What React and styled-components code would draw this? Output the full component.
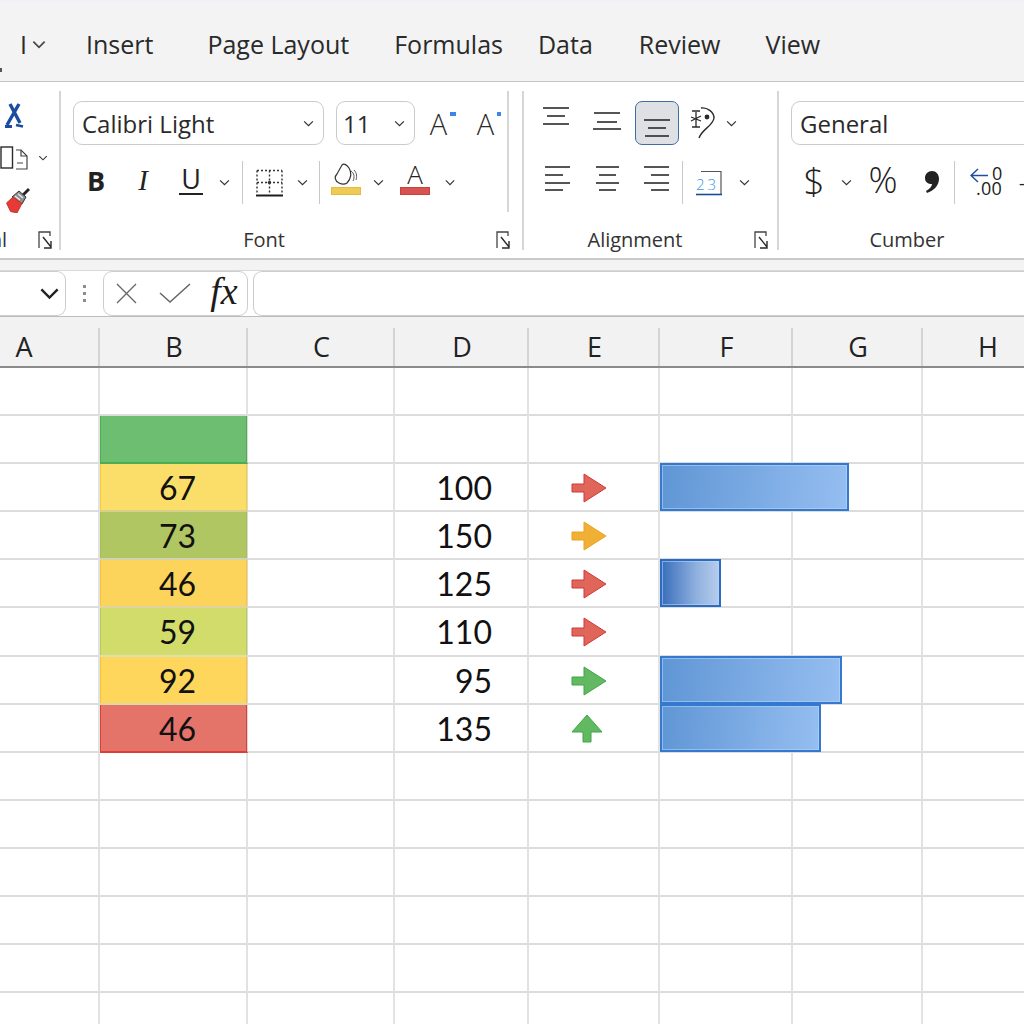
import React from "react";
import styled, { createGlobalStyle } from "styled-components";

const GlobalStyle = createGlobalStyle`
    html, body {
        margin: 0;
        padding: 0;
        background: #fff;
    }
    body {
        font-family: "Open Sans", "Liberation Sans", sans-serif;
        color: #1f1f1f;
    }
`

const Page = styled.div`
    width: 1024px;
    height: 1024px;
    overflow: hidden;
    background: #fff;
`

/* tabs */
const TabBar = styled.div`
    position: relative;
    height: 82px;
    box-sizing: border-box;
    padding: 5px 0 0 20px;
    background: #f3f3f3;
    border-top: 2px solid #eef2f7;
    border-bottom: 1px solid #c6c6c6;
    display: flex;
    align-items: center;
    white-space: nowrap;
    &::before {
        content: "";
        position: absolute;
        left: 0;
        top: 66px;
        width: 2px;
        height: 4px;
        background: #555;
    }
`

const Tab = styled.span`
    font-size: 25px;
    margin-left: ${(p) => p.$gap || 0}px;
    color: #2a2a2a;
    line-height: 1;
`

const TabChevron = styled.span`
    display: flex;
    margin-left: 5px;
`

/* ribbon */
const Ribbon = styled.div`
    height: 178px;
    box-sizing: border-box;
    display: flex;
    background: #fff;
    border-bottom: 2px solid #c9c9c9;
`

const Group = styled.section`
    flex: none;
    width: ${(p) => p.$width}px;
    height: 176px;
    display: flex;
    flex-direction: column;
`

const GroupBody = styled.div`
    display: flex;
    height: 146px;
`

const Divider = styled.div`
    flex: none;
    width: 2px;
    height: ${(p) => p.$h || 159}px;
    margin-top: 9px;
    background: #d6d6d6;
`

const Controls = styled.div`
    flex: none;
    width: ${(p) => p.$width}px;
    box-sizing: border-box;
    padding: 19px 0 0 12px;
    display: flex;
    flex-direction: column;
    gap: 16px;
`

const Row = styled.div`
    height: ${(p) => p.$h || 44}px;
    display: flex;
    align-items: center;
`

const Slot = styled.div`
    flex: none;
    width: ${(p) => p.$w}px;
    margin-left: ${(p) => p.$ml || 0}px;
    height: 100%;
    display: flex;
    align-items: center;
    justify-content: center;
`

const ActiveSlot = styled(Slot)`
    height: 44px;
    box-sizing: border-box;
    background: #dfe0e3;
    border: 1px solid #3f6ea6;
    border-radius: 7px;
`

const Select = styled.div`
    flex: none;
    width: ${(p) => p.$w}px;
    height: 44px;
    box-sizing: border-box;
    margin-left: ${(p) => p.$ml || 0}px;
    padding: 0 9px 0 ${(p) => p.$pl || 8}px;
    border: 1px solid #cbcbcb;
    border-radius: 9px;
    display: flex;
    align-items: center;
    justify-content: space-between;
    font-size: 24px;
    color: #2a2a2a;
`

const Sep = styled.div`
    flex: none;
    width: 1px;
    height: 43px;
    background: #c8c8c8;
`

const LabelRow = styled.div`
    height: 24px;
    display: flex;
    align-items: center;
    padding-right: ${(p) => p.$pr || 0}px;
`

const Label = styled.div`
    flex: none;
    width: ${(p) => p.$w}px;
    margin-left: ${(p) => p.$ml || 0}px;
    text-align: center;
    font-size: 20px;
    line-height: 24px;
    color: #333;
    white-space: nowrap;
`

const Launcher = styled.div`
    margin-left: auto;
    display: flex;
`

const GrowGlyph = styled.span`
    display: flex;
    align-items: flex-start;
    font-size: 29px;
    font-weight: 300;
    line-height: 1;
    color: #2a2a2a;
    &::after {
        content: "";
        width: ${(p) => p.$dot}px;
        height: 4px;
        margin: 3px 0 0 3px;
        background: #3b86e8;
    }
`

const FontGlyph = styled.span`
    font-family: ${(p) => (p.$serif ? '"Liberation Serif", serif' : '"Open Sans", sans-serif')};
    font-size: ${(p) => p.$size || 26}px;
    font-weight: ${(p) => p.$weight || 400};
    font-style: ${(p) => (p.$italic ? "italic" : "normal")};
    margin-bottom: ${(p) => p.$lift || 0}px;
    color: #222;
    line-height: 1;
`

const UnderGlyph = styled(FontGlyph)`
    border-bottom: 2px solid #222;
    padding: 0 2px 1px;
`

const ColorGlyph = styled.div`
    display: flex;
    flex-direction: column;
    align-items: center;
    justify-content: flex-end;
    width: 30px;
    height: 32px;
    margin-bottom: 7px;
    box-sizing: border-box;
`

const ColorBar = styled.div`
    width: 30px;
    height: 8px;
    flex: none;
    margin-top: 2px;
    background: ${(p) => p.$color};
    box-shadow: inset 0 0 0 1px ${(p) => p.$edge};
`

const ColorLetter = styled.span`
    font-size: 26px;
    line-height: 22px;
    font-weight: 300;
    color: #222;
`

const ClipStack = styled.div`
    flex: none;
    width: 60px;
    height: 146px;
    display: flex;
    flex-direction: column;
`

const ClipItem = styled.div`
    display: flex;
    align-items: center;
    height: ${(p) => p.$h}px;
    margin-top: ${(p) => p.$mt}px;
    padding-left: ${(p) => p.$pl || 0}px;
`

/* formula bar */
const Band = styled.div`
    height: 10px;
    background: #f3f3f3;
    border-bottom: 1px solid #d9d9d9;
`

const FormulaBar = styled.div`
    height: 46px;
    box-sizing: border-box;
    border-bottom: 1px solid #bdbdbd;
    display: flex;
    background: #fff;
`

const NameBox = styled.div`
    flex: none;
    width: 66px;
    height: 45px;
    box-sizing: border-box;
    padding-right: 5px;
    border: 1px solid #cdcdcd;
    border-left: none;
    border-radius: 0 9px 9px 0;
    display: flex;
    align-items: center;
    justify-content: flex-end;
`

const Grip = styled.div`
    flex: none;
    width: 37px;
    display: flex;
    flex-direction: column;
    align-items: center;
    justify-content: center;
    gap: 4px;
    i {
        width: 3px;
        height: 3px;
        background: #8d8d8d;
    }
`

const FxButtons = styled.div`
    flex: none;
    width: 145px;
    height: 45px;
    box-sizing: border-box;
    border: 1px solid #cdcdcd;
    border-radius: 9px;
    display: flex;
    align-items: center;
`

const FxSlot = styled.div`
    flex: none;
    width: ${(p) => p.$w}px;
    margin-left: ${(p) => p.$ml || 0}px;
    display: flex;
    justify-content: center;
`

const FxText = styled.span`
    font-family: "Liberation Serif", serif;
    font-style: italic;
    font-size: 38px;
    line-height: 1;
    margin-bottom: 6px;
    color: #1b1b1b;
`

const FormulaInput = styled.div`
    flex: 1;
    height: 45px;
    box-sizing: border-box;
    margin-left: 5px;
    border: 1px solid #cdcdcd;
    border-right: none;
    border-radius: 9px 0 0 9px;
`

/* sheet */
const COLUMNS = "152px 148px 147px 134px 131px 133px 130px 130px";

const ColumnHeader = styled.div`
    height: 51px;
    box-sizing: border-box;
    margin-left: -52px;
    width: 1105px;
    padding-top: 11px;
    background: #f2f2f2;
    border-bottom: 2px solid #8b8b8b;
    display: grid;
    grid-template-columns: ${COLUMNS};
`

const HeaderCell = styled.div`
    box-sizing: border-box;
    padding: 0 0 2px 2px;
    border-right: 2px solid #d4d4d4;
    display: flex;
    align-items: center;
    justify-content: center;
    font-size: 27px;
    line-height: 1;
    color: #222;
`

const Sheet = styled.div`
    margin-left: -52px;
    width: 1105px;
    display: grid;
    grid-template-columns: ${COLUMNS};
    grid-template-rows: repeat(5, 48px) 49px repeat(8, 48px);
`

const Cell = styled.div`
    position: relative;
    box-sizing: border-box;
    border-right: 2px solid #e2e2e2;
    border-bottom: 2px solid #dcdcdc;
    display: flex;
    align-items: center;
    font-family: Lato, "Liberation Sans", sans-serif;
    font-size: 32px;
    color: #111;
`

const HeatCell = styled(Cell)`
    justify-content: center;
    padding-left: 8px;
    background: ${(p) => p.$bg};
    box-shadow: inset 1px 0 0 ${(p) => p.$edge}, inset -1px 0 0 ${(p) => p.$edge};
    border-bottom-color: ${(p) => p.$line};
    border-right-width: 1px;
    border-right-color: #d9d9d9;
`

const NumberCell = styled(Cell)`
    justify-content: flex-end;
    padding-right: 35px;
`

const ArrowCell = styled(Cell)`
    justify-content: center;
    padding-right: ${(p) => p.$pr}px;
    padding-top: 1px;
`

const DataBar = styled.div`
    position: absolute;
    top: -1px;
    left: 0;
    z-index: 1;
    width: ${(p) => p.$width}px;
    height: 48px;
    box-sizing: border-box;
    border: 2px solid ${(p) => (p.$short ? "#2a6cc4" : "#3279cf")};
    background: ${(p) =>
        p.$short
            ? "linear-gradient(90deg, #3a6fbb 0%, #8fb0de 60%, #b6cdec 100%)"
            : "linear-gradient(95deg, #6096d5 0%, #95bef1 100%)"};
    box-shadow: inset 0 0 0 1px rgba(190, 215, 245, 0.55);
`

/* icons */
const Chevron = ({ w = 11, h = 7, color = "#333", sw = 1.4 }) => (
    <svg width={w} height={h} viewBox="0 0 12 8">
        <path d="M1 1.5 6 6.5 11 1.5" fill="none" stroke={color} strokeWidth={sw} />
    </svg>
)

const Lines = ({ w, h, lines }) => (
    <svg width={w} height={h} viewBox={`0 0 ${w} ${h}`}>
        {lines.map(([x1, x2, y]) => (
            <line key={y} x1={x1} x2={x2} y1={y} y2={y} stroke="#2b2b2b" strokeWidth="1.6" />
        ))}
    </svg>
)

const DialogLauncher = () => (
    <svg width="15" height="19" viewBox="0 0 15 19">
        <path d="M1 17V1H12V5" fill="none" stroke="#444" strokeWidth="1.3" />
        <path d="M5 6 13 16M13 10V17H6" fill="none" stroke="#2a2a2a" strokeWidth="1.4" />
    </svg>
)

const Scissors = () => (
    <svg width="20" height="25" viewBox="0 0 20 25">
        <path d="M6 1 16 20M15 1 3 22" fill="none" stroke="#1c4c9f" strokeWidth="3.4" />
        <path d="M1 23.5H8M12 22 19 23.5" fill="none" stroke="#1c4c9f" strokeWidth="2.8" />
    </svg>
)

const CopyIcon = () => (
    <svg width="28" height="24" viewBox="0 0 28 24">
        <rect x="1" y="1" width="11.5" height="21" fill="#fff" stroke="#2b2b2b" strokeWidth="1.4" />
        <path d="M16 23H27V10L21 4H16" fill="#fff" stroke="#444" strokeWidth="1.2" />
        <path d="M21 4V10H27M17 17H23" fill="none" stroke="#444" strokeWidth="1.2" />
    </svg>
)

const PainterIcon = () => (
    <svg width="24" height="25" viewBox="0 0 24 25">
        <path d="M16 8 23 1" stroke="#222" strokeWidth="2.8" />
        <path d="M6 9 13 3 20 9 16 16Z" fill="#8e8e8e" stroke="#333" strokeWidth="1" />
        <path d="M9 8 14 12M12 6 17 10" stroke="#eee" strokeWidth="1.2" />
        <path d="M0.5 15 7 9 16 15.5 11 25 4.5 23.5Z" fill="#e53a35" stroke="#b92a26" strokeWidth=".8" />
    </svg>
)

const BordersIcon = () => (
    <svg width="28" height="28" viewBox="0 0 28 28">
        <path d="M2 1.5H27M2 1.5V25M27 1.5V25M14.5 1.5V25M2 13.5H27" fill="none" stroke="#333" strokeWidth="1.4" strokeDasharray="2 2" />
        <circle cx="14.5" cy="13.5" r="1.7" fill="#333" />
        <path d="M1 26.5H28" stroke="#1c1c1c" strokeWidth="2" />
    </svg>
)

const BucketIcon = () => (
    <svg width="24" height="22" viewBox="0 0 24 22">
        <path d="M5 20C1 18 0 14 3 11L8 2C10 0 13 2 15 5 18 10 17 16 13 20 10 22 7 21 5 20Z" fill="#fff" stroke="#333" strokeWidth="1.2" />
        <path d="M17 8C20 10 21 14 19 18M20 7C23 10 23 14 22 17" fill="none" stroke="#555" strokeWidth="1" />
    </svg>
)

const OrientationIcon = () => (
    <svg width="26" height="32" viewBox="0 0 26 32">
        <path d="M1 10 11 14M1 14 11 9M6 5V20M2 20H10M2 4H10" fill="none" stroke="#2b2b2b" strokeWidth="1.3" />
        <path d="M11 1C17 0 24 5 24 11 23 19 12 22 9 31" fill="none" stroke="#2b2b2b" strokeWidth="1.4" />
        <circle cx="17" cy="10" r="2.4" fill="#2b2b2b" />
    </svg>
)

const WrapIcon = () => (
    <svg width="28" height="26" viewBox="0 0 28 26">
        <path d="M6 1.5H26V24" fill="none" stroke="#555" strokeWidth="1.2" />
        <path d="M1 24.5H27" stroke="#1d4a94" strokeWidth="1.6" />
        <text x="1" y="20" fontFamily="Open Sans, sans-serif" fontSize="15" fontWeight="300" letterSpacing="3" fill="#3e97ec">23</text>
    </svg>
)

const DecreaseDecimal = () => (
    <svg width="34" height="32" viewBox="0 0 34 32">
        <path d="M18 8.5H1M8 2 1 8.5 8 15" fill="none" stroke="#1e4f9e" strokeWidth="1.5" />
        <text x="22" y="13" fontFamily="Open Sans, sans-serif" fontSize="18" fill="#222">0</text>
        <text x="6" y="28" fontFamily="Open Sans, sans-serif" fontSize="18" letterSpacing=".3" fill="#222">.00</text>
    </svg>
)

const CommaIcon = () => (
    <svg width="16" height="23" viewBox="0 0 16 23">
        <path d="M8 0C12 0 15 3 15 8 15 15 9 20 3 22L2 20C6 18 8 15 8 13 4 13 1 11 1 7 1 3 4 0 8 0Z" fill="#222" />
    </svg>
)

const RightArrow = ({ fill, edge }) => (
    <svg width="36" height="30" viewBox="0 0 36 30">
        <path d="M1 11H13V1L35 15 13 29V19H1Z" fill={fill} stroke={edge} strokeWidth="1" strokeLinejoin="round" />
    </svg>
)

const UpArrow = ({ fill, edge }) => (
    <svg width="32" height="29" viewBox="0 0 32 29">
        <path d="M16 1 31 18H20V28H12V18H1Z" fill={fill} stroke={edge} strokeWidth="1" strokeLinejoin="round" />
    </svg>
)

const RED = { fill: "#e0655a", edge: "#cf3b36" };
const AMBER = { fill: "#f0b035", edge: "#eba420" };
const GREEN = { fill: "#62b961", edge: "#3fa648" };

const HEADERS = ["A", "B", "C", "D", "E", "F", "G", "H"];

const HEAT = [
    null,
    { value: "", bg: "#6dbe71", edge: "#4cae50", line: "#4cae50" },
    { value: 67, bg: "#fbde69", edge: "#f8cf2e", line: "#d8cf8a" },
    { value: 73, bg: "#afc662", edge: "#a6c050", line: "#d2d2b0" },
    { value: 46, bg: "#fdd45b", edge: "#fac433", line: "#dfd4a0" },
    { value: 59, bg: "#d2dc6a", edge: "#b4cf58", line: "#dfe0b0" },
    { value: 92, bg: "#fdd65b", edge: "#f9c42c", line: "#e0d8a4" },
    { value: 46, bg: "#e4736a", edge: "#dc3d36", line: "#dc3d36" },
];

// row index -> D value, E arrow, F bar width
const DATA = {
    2: { num: 100, arrow: "right", color: RED, bar: 189 },
    3: { num: 150, arrow: "right", color: AMBER },
    4: { num: 125, arrow: "right", color: RED, bar: 61, short: true },
    5: { num: 110, arrow: "right", color: RED },
    6: { num: 95, arrow: "right", color: GREEN, bar: 182 },
    7: { num: 135, arrow: "up", color: GREEN, bar: 161 },
};

const TOTAL_ROWS = 14;

function SheetRow({ index }) {
    const heat = HEAT[index];
    const row = DATA[index];
    const isUp = row && row.arrow === "up";
    const Arrow = isUp ? UpArrow : RightArrow;
    return (
        <>
            <Cell />
            {heat ? (
                <HeatCell $bg={heat.bg} $edge={heat.edge} $line={heat.line}>{heat.value}</HeatCell>
            ) : (
                <Cell />
            )}
            <Cell />
            {row ? <NumberCell>{row.num}</NumberCell> : <Cell />}
            {row ? (
                <ArrowCell $pr={isUp ? 14 : 10}>
                    <Arrow fill={row.color.fill} edge={row.color.edge} />
                </ArrowCell>
            ) : (
                <Cell />
            )}
            <Cell>{row && row.bar ? <DataBar $width={row.bar} $short={row.short} /> : null}</Cell>
            <Cell />
            <Cell />
        </>
    );
}

export default function App() {
    return (
        <Page>
            <GlobalStyle />
            <TabBar>
                <Tab>I</Tab>
                <TabChevron>
                    <Chevron w={14} h={9} color="#444" sw={1.5} />
                </TabChevron>
                <Tab $gap={40}>Insert</Tab>
                <Tab $gap={54}>Page Layout</Tab>
                <Tab $gap={45}>Formulas</Tab>
                <Tab $gap={35}>Data</Tab>
                <Tab $gap={46}>Review</Tab>
                <Tab $gap={45}>View</Tab>
            </TabBar>

            <Ribbon>
                <Group $width={59}>
                    <GroupBody>
                        <ClipStack>
                            <ClipItem $h={25} $mt={21} $pl={4}><Scissors /></ClipItem>
                            <ClipItem $h={24} $mt={18} $pl={0}>
                                <CopyIcon />
                                <Slot $w={14} $ml={8}><Chevron w={10} h={6} /></Slot>
                            </ClipItem>
                            <ClipItem $h={25} $mt={18} $pl={6}><PainterIcon /></ClipItem>
                        </ClipStack>
                    </GroupBody>
                    <LabelRow $pr={6}>
                        <Label $w={14} $ml={-9}>al</Label>
                        <Launcher><DialogLauncher /></Launcher>
                    </LabelRow>
                </Group>
                <Divider />

                <Group $width={461}>
                    <GroupBody>
                        <Controls $width={446}>
                            <Row>
                                <Select $w={251}>
                                    Calibri Light
                                    <Chevron />
                                </Select>
                                <Select $w={79} $ml={12} $pl={6}>
                                    11
                                    <Chevron />
                                </Select>
                                <Slot $w={30} $ml={13}><GrowGlyph $dot={6}>A</GrowGlyph></Slot>
                                <Slot $w={28} $ml={17}><GrowGlyph $dot={4}>A</GrowGlyph></Slot>
                            </Row>
                            <Row $h={43}>
                                <Slot $w={46}><FontGlyph $weight={700} $size={27} $lift={5}>B</FontGlyph></Slot>
                                <Slot $w={48}><FontGlyph $italic $serif $size={29} $lift={5}>I</FontGlyph></Slot>
                                <Slot $w={48}><UnderGlyph $size={27} $lift={5}>U</UnderGlyph></Slot>
                                <Slot $w={18}><Chevron /></Slot>
                                <Slot $w={18}><Sep /></Slot>
                                <Slot $w={36}><BordersIcon /></Slot>
                                <Slot $w={30}><Chevron /></Slot>
                                <Slot $w={4}><Sep /></Slot>
                                <Slot $w={50}>
                                    <ColorGlyph>
                                        <BucketIcon />
                                        <ColorBar $color="#edcb55" $edge="#e2bb3f" />
                                    </ColorGlyph>
                                </Slot>
                                <Slot $w={14}><Chevron /></Slot>
                                <Slot $w={60}>
                                    <ColorGlyph>
                                        <ColorLetter>A</ColorLetter>
                                        <ColorBar $color="#d6534f" $edge="#c9403d" />
                                    </ColorGlyph>
                                </Slot>
                                <Slot $w={10}><Chevron /></Slot>
                            </Row>
                        </Controls>
                        <Divider $h={121} />
                    </GroupBody>
                    <LabelRow $pr={11}>
                        <Label $w={406}>Font</Label>
                        <Launcher><DialogLauncher /></Launcher>
                    </LabelRow>
                </Group>
                <Divider />

                <Group $width={253}>
                    <GroupBody>
                        <Controls $width={253}>
                            <Row>
                                <Slot $w={40}>
                                    <Lines w={27} h={44} lines={[[0, 26, 7], [4, 22, 15], [0, 26, 23]]} />
                                </Slot>
                                <Slot $w={44} $ml={9}>
                                    <Lines w={28} h={44} lines={[[1, 27, 12], [4, 24, 21], [0, 28, 28]]} />
                                </Slot>
                                <ActiveSlot $w={44} $ml={6}>
                                    <Lines w={28} h={42} lines={[[1, 27, 18], [5, 23, 26], [2, 26, 34]]} />
                                </ActiveSlot>
                                <Slot $w={44} $ml={2}><OrientationIcon /></Slot>
                                <Slot $w={12}><Chevron /></Slot>
                            </Row>
                            <Row $h={43}>
                                <Slot $w={42}>
                                    <Lines w={25} h={43} lines={[[0, 25, 6], [0, 18, 14], [0, 25, 22], [0, 18, 29]]} />
                                </Slot>
                                <Slot $w={42} $ml={8}>
                                    <Lines w={23} h={43} lines={[[0, 23, 6], [3, 20, 14], [0, 23, 22], [3, 20, 29]]} />
                                </Slot>
                                <Slot $w={42} $ml={7}>
                                    <Lines w={25} h={43} lines={[[0, 25, 6], [7, 25, 14], [0, 25, 22], [7, 25, 29]]} />
                                </Slot>
                                <Slot $w={10}><Sep /></Slot>
                                <Slot $w={44}><WrapIcon /></Slot>
                                <Slot $w={16} $ml={5}><Chevron /></Slot>
                            </Row>
                        </Controls>
                    </GroupBody>
                    <LabelRow $pr={8}>
                        <Label $w={222}>Alignment</Label>
                        <Launcher><DialogLauncher /></Launcher>
                    </LabelRow>
                </Group>
                <Divider />

                <Group $width={256}>
                    <GroupBody>
                        <Controls $width={256}>
                            <Row>
                                <Select $w={300}>General</Select>
                            </Row>
                            <Row $h={43}>
                                <Slot $w={46}><FontGlyph $weight={300} $size={37} $lift={5}>$</FontGlyph></Slot>
                                <Slot $w={16} $ml={1}><Chevron /></Slot>
                                <Slot $w={50} $ml={4}><FontGlyph $weight={300} $size={36} $lift={5}>%</FontGlyph></Slot>
                                <Slot $w={40} $ml={4}><CommaIcon /></Slot>
                                <Slot $w={4}><Sep /></Slot>
                                <Slot $w={62}><DecreaseDecimal /></Slot>
                                <Slot $w={8}><FontGlyph $size={18}>-</FontGlyph></Slot>
                            </Row>
                        </Controls>
                    </GroupBody>
                    <LabelRow>
                        <Label $w={256}>Cumber</Label>
                    </LabelRow>
                </Group>
            </Ribbon>

            <Band />
            <FormulaBar>
                <NameBox><Chevron w={21} h={13} color="#222" sw={1.5} /></NameBox>
                <Grip><i /><i /><i /></Grip>
                <FxButtons>
                    <FxSlot $w={22} $ml={11}>
                        <svg width="21" height="21" viewBox="0 0 21 21">
                            <path d="M1 1 20 20M20 1 1 20" stroke="#666" strokeWidth="1.3" />
                        </svg>
                    </FxSlot>
                    <FxSlot $w={34} $ml={21}>
                        <svg width="32" height="21" viewBox="0 0 32 21">
                            <path d="M1 10 11 19 31 1" fill="none" stroke="#666" strokeWidth="1.5" />
                        </svg>
                    </FxSlot>
                    <FxSlot $w={40} $ml={12}><FxText>fx</FxText></FxSlot>
                </FxButtons>
                <FormulaInput />
            </FormulaBar>

            <ColumnHeader>
                {HEADERS.map((h) => (
                    <HeaderCell key={h}>{h}</HeaderCell>
                ))}
            </ColumnHeader>
            <Sheet>
                {Array.from({ length: TOTAL_ROWS }, (_, i) => (
                    <SheetRow key={i} index={i} />
                ))}
            </Sheet>
        </Page>
    );
}
